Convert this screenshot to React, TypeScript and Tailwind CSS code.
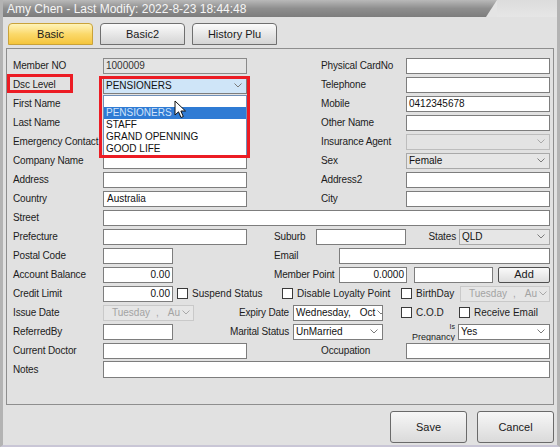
import type { ReactNode } from 'react';
import clsx from 'clsx';

const Chevron = ({ muted }: { muted?: boolean }) => (
  <svg width="8" height="5" viewBox="0 0 8 5" className="shrink-0">
    <path d="M0.5 0.5 L4 4 L7.5 0.5" fill="none" stroke={muted ? '#a8a8a8' : '#7a7a7a'} strokeWidth="1" />
  </svg>
);

const Row = ({ children }: { children: ReactNode }) => (
  <div className="flex h-[19px] items-center">{children}</div>
);

const Label = ({ children, className }: { children?: ReactNode; className?: string }) => (
  <div className={clsx('shrink-0 whitespace-nowrap text-[10px] tracking-[-0.15px] text-[#1c1c1c]', className)}>{children}</div>
);

const Field = ({ value, className, right }: { value?: string; className?: string; right?: boolean }) => (
  <div
    className={clsx(
      'h-[16px] shrink-0 overflow-hidden whitespace-nowrap border border-[#7d7d7d] bg-white px-[2px] text-[10px] leading-[14px] text-[#111]',
      right && 'text-right',
      className,
    )}
  >
    {value}
  </div>
);

const Select = ({ value, tone = 'white' }: { value?: string; tone?: 'white' | 'gray' | 'disabled' }) => (
  <div
    className={clsx(
      'flex h-[16px] shrink-0 items-center justify-between border pl-[2px] pr-[4px] text-[10px] leading-[14px] text-[#111]',
      tone === 'white' && 'border-[#7d7d7d] bg-white',
      tone === 'gray' && 'border-[#a9a9a9] bg-[#e6e6e6]',
      tone === 'disabled' && 'border-[#bdbdbd] bg-[#e3e3e3]',
    )}
  >
    <span className="whitespace-nowrap">{value}</span>
    <Chevron muted={tone === 'disabled'} />
  </div>
);

const DateBox = ({ disabled, className }: { disabled?: boolean; className?: string }) => (
  <div
    className={clsx(
      'flex h-[16px] shrink-0 items-center overflow-hidden border pr-[3px] text-[10px] leading-[14px]',
      disabled ? 'border-[#c9c9c9] bg-[#e6e6e6] pl-[8px] text-[#a3a3a3]' : 'border-[#7d7d7d] bg-white pl-[2px] text-[#111]',
      className,
    )}
  >
    {disabled ? (
      <>
        <span>Tuesday</span>
        <span className="ml-[6px]">,</span>
        <span className="ml-[9px]">Au</span>
      </>
    ) : (
      <>
        <span>Wednesday,</span>
        <span className="ml-[9px]">Oct</span>
      </>
    )}
    <span className="ml-auto pl-[2px]">
      <Chevron muted={disabled} />
    </span>
  </div>
);

const Check = ({ label, className }: { label: string; className?: string }) => (
  <div className={clsx('flex shrink-0 items-center', className)}>
    <div className="h-[11px] w-[11px] border border-[#3a3a3a] bg-white" />
    <span className="ml-[4px] whitespace-nowrap text-[10px] text-[#1c1c1c]">{label}</span>
  </div>
);

const Tab = ({ label, active }: { label: string; active?: boolean }) => (
  <div
    className={clsx(
      'flex h-[22px] w-[85px] items-center justify-center rounded-t-[4px] border text-[11px] text-[#1a1a1a]',
      active
        ? 'border-[#c9a23a] bg-gradient-to-b from-[#fff4b8] via-[#fbd96a] to-[#f5c53a]'
        : 'border-[#6f6f6f] bg-gradient-to-b from-[#fbfbfb] to-[#d4d4d4]',
    )}
  >
    {label}
  </div>
);

const BigButton = ({ label }: { label: string }) => (
  <div className="flex h-[32px] w-[77px] items-center justify-center rounded-[3px] border border-[#6a6a6a] bg-gradient-to-b from-[#f7f7f7] to-[#dadada] text-[11px] text-[#1a1a1a]">
    {label}
  </div>
);

const Cursor = () => (
  <svg width="13" height="19" viewBox="0 0 13 19" className="absolute left-[71px] top-[22px] z-30">
    <path d="M1 1 L1 15 L4.5 11.8 L7 17.5 L9.3 16.5 L6.9 11 L11.5 11 Z" fill="#fff" stroke="#111" strokeWidth="1" strokeLinejoin="round" />
  </svg>
);

const options = ['PENSIONERS', 'STAFF', 'GRAND OPENNING', 'GOOD LIFE'];

export default function App() {
  return (
    <div className="flex h-[447px] w-[560px] flex-col overflow-hidden border-x-[3px] border-b-[2px] border-x-[#b3b3b3] border-b-[#c9c6d6] bg-[#e1e1e1] font-['Liberation_Sans',Arial,sans-serif]">
      {/* title bar */}
      <div className="flex h-[17px] shrink-0">
        <div className="flex w-[482px] items-center bg-gradient-to-b from-[#b9b9b9] via-[#8e8e8e] to-[#7d7d7d] pl-[4px] text-[12px] text-[#f6f6f6]">
          Amy Chen - Last Modify: 2022-8-23 18:44:48
        </div>
        <svg width="12" height="17" viewBox="0 0 12 17" className="shrink-0">
          <defs>
            <linearGradient id="tb" x1="0" y1="0" x2="0" y2="1">
              <stop offset="0" stopColor="#b9b9b9" />
              <stop offset="0.5" stopColor="#8e8e8e" />
              <stop offset="1" stopColor="#7d7d7d" />
            </linearGradient>
          </defs>
          <rect width="12" height="17" fill="#e4e4e4" />
          <path d="M0 0 L12 0 L1 17 L0 17 Z" fill="url(#tb)" />
        </svg>
        <div className="flex-1 bg-gradient-to-b from-[#dcdcdc] to-[#e6e6e6]" />
      </div>

      {/* tabs */}
      <div className="ml-[5px] mt-[6px] flex shrink-0 gap-[7px]">
        <Tab label="Basic" active />
        <Tab label="Basic2" />
        <Tab label="History Plu" />
      </div>

      {/* panel */}
      <div className="ml-[3px] mr-[3px] mt-[3px] shrink-0 border border-[#8e8e8e] pb-[25px] pl-[6px] pr-[3px] pt-[7px]">
        <Row>
          <Label className="w-[90px]">Member NO</Label>
          <Field value="1000009" className="w-[144px] !border-[#8a8a8a] !bg-[#e4e4e4] !text-[#333]" />
          <Label className="ml-[74px] w-[85px]">Physical CardNo</Label>
          <Field className="flex-1" />
        </Row>
        <Row>
          <Label className="relative w-[90px]">
            Dsc Level
            <div className="absolute left-[-6px] top-[-3px] h-[19px] w-[66px] border-[3px] border-[#ec1c24]" />
          </Label>
          <div className="relative top-[1px] w-[144px] shrink-0">
            <div className="flex h-[16px] items-center justify-between border border-[#7d7d7d] bg-[#cfe5f8] pl-[2px] pr-[4px] text-[10px] text-[#111]">
              <span>PENSIONERS</span>
              <Chevron />
            </div>
            <div className="absolute left-0 top-[17px] z-10 w-[144px] border border-[#6f8fb8] bg-white pb-[1px] text-[10px] leading-[12px] text-[#111]">
              <div className="h-[11px]" />
              {options.map((o, i) => (
                <div key={o} className={clsx('px-[2px]', i === 0 && 'bg-[#2f7bd4] text-[#cfe3fb]')}>
                  {o}
                </div>
              ))}
            </div>
            <div className="absolute left-[-4px] top-[-2px] z-20 h-[82px] w-[151px] border-[3px] border-[#ec1c24]" />
            <Cursor />
          </div>
          <Label className="ml-[74px] w-[85px]">Telephone</Label>
          <Field className="flex-1" />
        </Row>
        <Row>
          <Label className="w-[90px]">First Name</Label>
          <Field className="w-[144px]" />
          <Label className="ml-[74px] w-[85px]">Mobile</Label>
          <Field value="0412345678" className="flex-1" />
        </Row>
        <Row>
          <Label className="w-[90px]">Last Name</Label>
          <Field className="w-[144px]" />
          <Label className="ml-[74px] w-[85px]">Other Name</Label>
          <Field className="flex-1" />
        </Row>
        <Row>
          <Label className="w-[90px]">Emergency Contact</Label>
          <Field className="w-[144px]" />
          <Label className="ml-[74px] w-[85px]">Insurance Agent</Label>
          <div className="flex-1">
            <Select tone="disabled" />
          </div>
        </Row>
        <Row>
          <Label className="w-[90px]">Company Name</Label>
          <Field className="w-[144px]" />
          <Label className="ml-[74px] w-[85px]">Sex</Label>
          <div className="flex-1">
            <Select value="Female" tone="gray" />
          </div>
        </Row>
        <Row>
          <Label className="w-[90px]">Address</Label>
          <Field className="w-[144px]" />
          <Label className="ml-[74px] w-[85px]">Address2</Label>
          <Field className="flex-1" />
        </Row>
        <Row>
          <Label className="w-[90px]">Country</Label>
          <Field value="Australia" className="w-[144px] pl-[3px]" />
          <Label className="ml-[74px] w-[85px]">City</Label>
          <Field className="flex-1" />
        </Row>
        <Row>
          <Label className="w-[90px]">Street</Label>
          <Field className="flex-1" />
        </Row>
        <Row>
          <Label className="w-[90px]">Prefecture</Label>
          <Field className="w-[144px]" />
          <Label className="ml-[27px] w-[42px]">Suburb</Label>
          <Field className="w-[90px]" />
          <Label className="flex-1 pr-[3px] text-right">States</Label>
          <div className="w-[91px] shrink-0">
            <Select value="QLD" tone="gray" />
          </div>
        </Row>
        <Row>
          <Label className="w-[90px]">Postal Code</Label>
          <Field className="w-[70px]" />
          <Label className="ml-[101px] w-[65px]">Email</Label>
          <Field className="flex-1" />
        </Row>
        <Row>
          <Label className="w-[90px]">Account Balance</Label>
          <Field value="0.00" right className="w-[70px]" />
          <Label className="ml-[101px] w-[65px]">Member Point</Label>
          <Field value="0.0000" right className="w-[68px]" />
          <Field className="ml-[7px] w-[79px]" />
          <div className="ml-[5px] flex h-[16px] flex-1 items-center justify-center rounded-[2px] border border-[#4f4f4f] bg-gradient-to-b from-[#fafafa] to-[#dedede] text-[11px] text-[#1a1a1a]">
            Add
          </div>
        </Row>
        <Row>
          <Label className="w-[90px]">Credit Limit</Label>
          <Field value="0.00" right className="w-[70px]" />
          <Check label="Suspend Status" className="w-[109px] pl-[4px]" />
          <Check label="Disable Loyalty Point" className="w-[119px]" />
          <Check label="BirthDay" className="w-[59px]" />
          <DateBox disabled className="flex-1" />
        </Row>
        <Row>
          <Label className="w-[90px]">Issue Date</Label>
          <DateBox disabled className="w-[91px]" />
          <Label className="w-[99px] pr-[4px] text-right">Expiry Date</Label>
          <DateBox className="w-[90px]" />
          <Check label="C.O.D" className="ml-[18px] w-[58px]" />
          <Check label="Receive Email" />
        </Row>
        <Row>
          <Label className="w-[90px]">ReferredBy</Label>
          <Field className="w-[70px]" />
          <Label className="w-[120px] pr-[4px] text-right">Marital Status</Label>
          <div className="w-[90px] shrink-0">
            <Select value="UnMarried" />
          </div>
          <div className="flex h-[19px] w-[75px] shrink-0 flex-col items-end overflow-hidden pr-[3px] pt-[1px] text-[#1c1c1c]">
            <span className="text-[7px] leading-[8px]">Is</span>
            <span className="text-[9px] leading-[12px]">Pregnancy</span>
          </div>
          <div className="flex-1">
            <Select value="Yes" />
          </div>
        </Row>
        <Row>
          <Label className="w-[90px]">Current Doctor</Label>
          <Field className="w-[144px]" />
          <Label className="ml-[74px] w-[85px]">Occupation</Label>
          <Field className="flex-1" />
        </Row>
        <Row>
          <Label className="w-[90px]">Notes</Label>
          <Field className="h-[17px] flex-1" />
        </Row>
      </div>

      {/* footer buttons */}
      <div className="mr-[3px] mt-[6px] flex justify-end gap-[10px]">
        <BigButton label="Save" />
        <BigButton label="Cancel" />
      </div>
    </div>
  );
}
